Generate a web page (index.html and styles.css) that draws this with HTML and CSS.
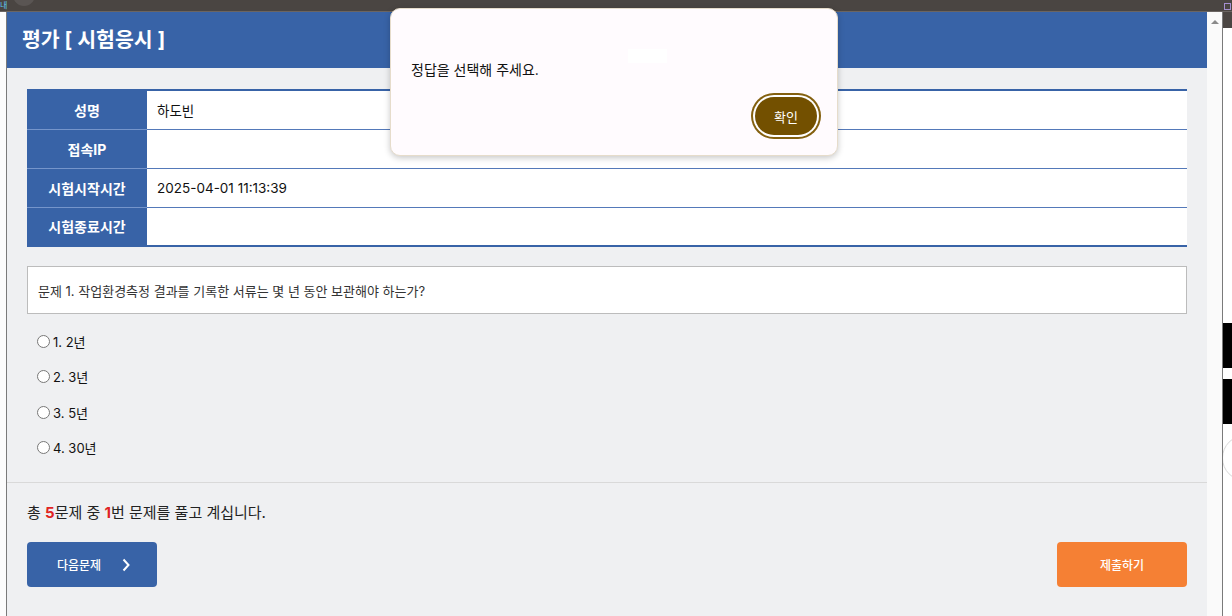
FILE: index.html
```html
<!DOCTYPE html>
<html lang="ko">
<head>
    <meta charset="UTF-8">
    <meta name="viewport" content="width=device-width, initial-scale=1.0">
    <title>평가 [ 시험응시 ]</title>
    <link rel="stylesheet" href="styles.css">
</head>
<body>
    <div class="topbar">
        <span class="tb-glyph">내</span>
        <span class="tb-dot"></span>
        <span class="tb-box"></span>
    </div>

    <div class="desk">
        <div class="side-left"></div>

        <div class="window">
            <div class="page">
                <header class="page-head">
                    <h1>평가 [ 시험응시 ]</h1>
                </header>

                <div class="page-body">
                    <table class="info">
                        <tr>
                            <th>성명</th>
                            <td>하도빈</td>
                        </tr>
                        <tr>
                            <th>접속IP</th>
                            <td></td>
                        </tr>
                        <tr>
                            <th>시험시작시간</th>
                            <td>2025-04-01 11:13:39</td>
                        </tr>
                        <tr>
                            <th>시험종료시간</th>
                            <td></td>
                        </tr>
                    </table>

                    <div class="question">문제 1. 작업환경측정 결과를 기록한 서류는 몇 년 동안 보관해야 하는가?</div>

                    <ul class="choices">
                        <li><label><input type="radio" name="answer" value="1"> 1. 2년</label></li>
                        <li><label><input type="radio" name="answer" value="2"> 2. 3년</label></li>
                        <li><label><input type="radio" name="answer" value="3"> 3. 5년</label></li>
                        <li><label><input type="radio" name="answer" value="4"> 4. 30년</label></li>
                    </ul>
                </div>

                <div class="page-foot">
                    <p class="progress">총 <b>5</b>문제 중 <b>1</b>번 문제를 풀고 계십니다.</p>
                    <div class="actions">
                        <button class="btn btn-next">다음문제
                            <svg width="8" height="14" viewBox="0 0 8 14"><polyline points="1.5,1.5 6.5,7 1.5,12.5" fill="none" stroke="#fff" stroke-width="2"/></svg>
                        </button>
                        <button class="btn btn-submit">제출하기</button>
                    </div>
                </div>
            </div>

            <div class="scrollbar"><span class="arrow-up"></span></div>
        </div>

        <div class="side-right">
            <div class="sr-dark"></div>
            <div class="sr-block first"></div>
            <div class="sr-block"></div>
            <div class="sr-ring"></div>
        </div>
    </div>

    <!-- 알림 대화상자 -->
    <div class="dialog">
        <span class="dialog-spot"></span>
        <p class="dialog-msg">정답을 선택해 주세요.</p>
        <div class="dialog-actions">
            <button class="dialog-ok">확인</button>
        </div>
    </div>
</body>
</html>
```

FILE: styles.css
```css
body {
    margin: 0;
    width: 1232px;
    height: 616px;
    overflow: hidden;
    background: #fff;
    font-family: Inter, "Noto Sans CJK KR", sans-serif;
    color: #111;
    position: relative;
}
.topbar {
    height: 11px;
    background: #4a4542;
    border-bottom: 1px solid #6b6562;
    display: flex;
    align-items: flex-start;
    overflow: hidden;
}
.tb-glyph {
    color: #5fc8f0;
    font-size: 8px;
    line-height: 10px;
}
.tb-dot {
    width: 22px;
    height: 22px;
    border-radius: 50%;
    background: #5a5553;
    margin: -16px 0 0 6px;
}
.tb-box {
    margin: 3px 1px 0 auto;
    width: 5px;
    height: 5px;
    border: 1px solid #a48fd0;
}
.desk {
    display: flex;
    height: 604px;
}
.side-left {
    width: 6px;
    flex-shrink: 0;
    background: #fcfcfc;
}
.window {
    display: flex;
    flex-shrink: 0;
    border-left: 1px solid #7a7a7a;
    border-right: 1px solid #7a7a7a;
}
.page {
    width: 1200px;
    background: #eff0f2;
}
.page-head {
    height: 56px;
    background: #3863a7;
    display: flex;
    align-items: center;
    padding-left: 15px;
}
.page-head h1 {
    margin: 0;
    color: #fff;
    font-size: 20.5px;
    font-weight: 700;
    line-height: 24px;
}
.page-body {
    padding: 21px 20px 17px;
}
.info {
    width: 100%;
    border-collapse: collapse;
    border-top: 2px solid #3863a7;
    border-bottom: 2px solid #3863a7;
    font-size: 13.5px;
}
.info tr {
    height: 39px;
}
.info th {
    width: 120px;
    background: #3863a7;
    color: #fff;
    font-size: 14px;
    font-weight: 700;
    text-align: center;
    border-bottom: 1px solid #7595cb;
    padding: 0;
}
.info td {
    background: #fff;
    border-bottom: 1px solid #5479b9;
    padding: 0 10px;
}
.info tr:last-child th,
.info tr:last-child td {
    border-bottom: none;
}
.question {
    margin-top: 19px;
    height: 46px;
    background: #fff;
    border: 1px solid #bcbcbc;
    padding-left: 10px;
    display: flex;
    align-items: center;
    font-size: 13px;
    color: #333;
}
.choices {
    list-style: none;
    margin: 10px 0 0;
    padding: 0 0 0 10px;
}
.choices li {
    height: 35.3px;
    display: flex;
    align-items: center;
    font-size: 13px;
}
.choices label {
    display: flex;
    align-items: center;
}
.choices input {
    margin: 0 3px 0 0;
    width: 13px;
    height: 13px;
}
.page-foot {
    border-top: 1px solid #d9d9d9;
    padding: 19px 20px;
}
.progress {
    margin: 0;
    font-size: 15px;
    line-height: 22px;
    color: #222;
}
.progress b {
    color: #e02323;
}
.actions {
    margin-top: 18px;
    display: flex;
    justify-content: space-between;
}
.btn {
    width: 130px;
    height: 45px;
    border: none;
    border-radius: 4px;
    color: #fff;
    font-family: Inter, "Noto Sans CJK KR", sans-serif;
    font-size: 12px;
    font-weight: 500;
    cursor: pointer;
}
.btn-next {
    background: #3863a7;
    display: flex;
    align-items: center;
    gap: 21px;
    padding-left: 30px;
}
.btn-submit {
    background: #f58034;
}
.scrollbar {
    width: 15px;
    background: #fafafa;
    display: flex;
    justify-content: center;
    padding-top: 8px;
    box-sizing: border-box;
}
.arrow-up {
    width: 0;
    height: 0;
    border-left: 4px solid transparent;
    border-right: 4px solid transparent;
    border-bottom: 4px solid #8a8a8a;
}
.side-right {
    flex: 1;
    min-width: 0;
    overflow: hidden;
    background: #fff;
}
.sr-dark {
    height: 16px;
    background: #4a4542;
}
.sr-block {
    height: 45px;
    background: #000;
    margin-top: 11px;
}
.sr-block.first {
    margin-top: 295px;
}
.sr-ring {
    width: 44px;
    height: 44px;
    margin: 11px 0 0 -1px;
    border: 1px solid #d8d8d8;
    border-radius: 50%;
}
.dialog {
    position: absolute;
    left: 390px;
    top: 8px;
    width: 448px;
    height: 148px;
    box-sizing: border-box;
    background: #fffbfe;
    border: 1px solid #e6dccb;
    border-radius: 10px;
    box-shadow: 0 2px 6px rgba(0, 0, 0, 0.22);
    padding: 51px 20px 0;
}
.dialog-spot {
    position: absolute;
    left: 237px;
    top: 40px;
    width: 39px;
    height: 14px;
    background: #fff;
}
.dialog-msg {
    margin: 0;
    font-size: 14px;
    line-height: 20px;
    color: #111;
}
.dialog-actions {
    display: flex;
    justify-content: flex-end;
    margin-top: 17px;
}
.dialog-ok {
    width: 62px;
    height: 38px;
    border: none;
    border-radius: 19px;
    background: #735000;
    color: #fff;
    font-family: Inter, "Noto Sans CJK KR", sans-serif;
    font-size: 13px;
    box-shadow: 0 0 0 2px #fff, 0 0 0 4px #84600f;
}
```
